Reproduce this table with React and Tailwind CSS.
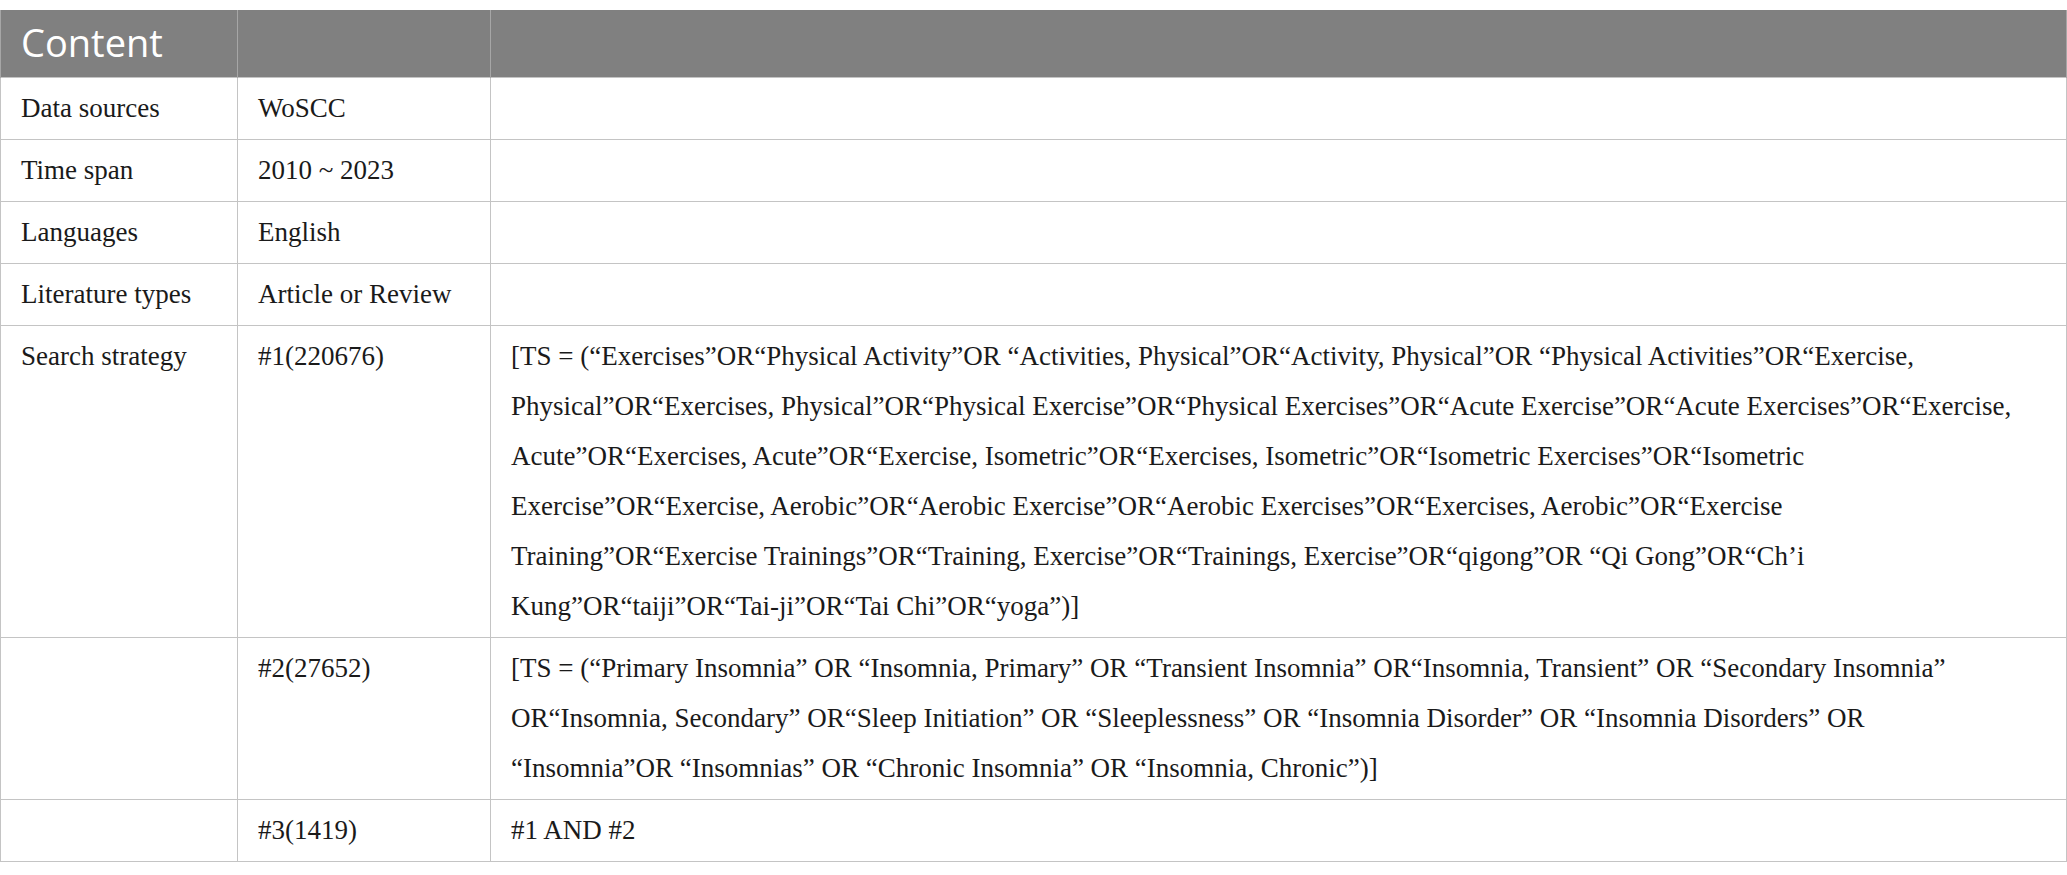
const rows = [
  { a: "Data sources", b: "WoSCC", c: [] },
  { a: "Time span", b: "2010 ~ 2023", c: [] },
  { a: "Languages", b: "English", c: [] },
  { a: "Literature types", b: "Article or Review", c: [] },
  {
    a: "Search strategy",
    b: "#1(220676)",
    c: [
      "[TS = (\u201cExercises\u201dOR\u201cPhysical Activity\u201dOR \u201cActivities, Physical\u201dOR\u201cActivity, Physical\u201dOR \u201cPhysical Activities\u201dOR\u201cExercise,",
      "Physical\u201dOR\u201cExercises, Physical\u201dOR\u201cPhysical Exercise\u201dOR\u201cPhysical Exercises\u201dOR\u201cAcute Exercise\u201dOR\u201cAcute Exercises\u201dOR\u201cExercise,",
      "Acute\u201dOR\u201cExercises, Acute\u201dOR\u201cExercise, Isometric\u201dOR\u201cExercises, Isometric\u201dOR\u201cIsometric Exercises\u201dOR\u201cIsometric",
      "Exercise\u201dOR\u201cExercise, Aerobic\u201dOR\u201cAerobic Exercise\u201dOR\u201cAerobic Exercises\u201dOR\u201cExercises, Aerobic\u201dOR\u201cExercise",
      "Training\u201dOR\u201cExercise Trainings\u201dOR\u201cTraining, Exercise\u201dOR\u201cTrainings, Exercise\u201dOR\u201cqigong\u201dOR \u201cQi Gong\u201dOR\u201cCh\u2019i",
      "Kung\u201dOR\u201ctaiji\u201dOR\u201cTai-ji\u201dOR\u201cTai Chi\u201dOR\u201cyoga\u201d)]",
    ],
  },
  {
    a: "",
    b: "#2(27652)",
    c: [
      "[TS = (\u201cPrimary Insomnia\u201d OR \u201cInsomnia, Primary\u201d OR \u201cTransient Insomnia\u201d OR\u201cInsomnia, Transient\u201d OR \u201cSecondary Insomnia\u201d",
      "OR\u201cInsomnia, Secondary\u201d OR\u201cSleep Initiation\u201d OR \u201cSleeplessness\u201d OR \u201cInsomnia Disorder\u201d OR \u201cInsomnia Disorders\u201d OR",
      "\u201cInsomnia\u201dOR \u201cInsomnias\u201d OR \u201cChronic Insomnia\u201d OR \u201cInsomnia, Chronic\u201d)]",
    ],
  },
  { a: "", b: "#3(1419)", c: ["#1 AND #2"] },
];

export default function App() {
  return (
    <div className="w-[2067px] h-[875px] bg-white pt-[10px]">
      <table className="w-[2067px] border-collapse table-fixed">
        <colgroup>
          <col className="w-[237px]" />
          <col className="w-[253px]" />
          <col />
        </colgroup>
        <thead>
          <tr className="h-[67px] bg-[#808080]">
            <th className="border-x border-[#a6a6a6] px-[20px] pb-[2px] text-left align-middle font-normal text-white text-[38px] font-['Open_Sans',sans-serif]">
              Content
            </th>
            <th className="border-x border-[#a6a6a6]" />
            <th className="border-x border-[#a6a6a6]" />
          </tr>
        </thead>
        <tbody className="font-['Liberation_Serif',serif] text-[#1a1a1a] text-[27px] leading-[50px]">
          {rows.map((r, i) => (
            <tr key={i}>
              <td className="border border-[#c4c4c4] px-[20px] py-[5.5px] align-top whitespace-nowrap">
                {r.a}
              </td>
              <td className="border border-[#c4c4c4] px-[20px] py-[5.5px] align-top whitespace-nowrap">
                {r.b}
              </td>
              <td className="border border-[#c4c4c4] px-[20px] py-[5.5px] align-top whitespace-nowrap">
                {r.c.length === 0 ? "\u00a0" : r.c.map((line, j) => <div key={j}>{line}</div>)}
              </td>
            </tr>
          ))}
        </tbody>
      </table>
    </div>
  );
}
